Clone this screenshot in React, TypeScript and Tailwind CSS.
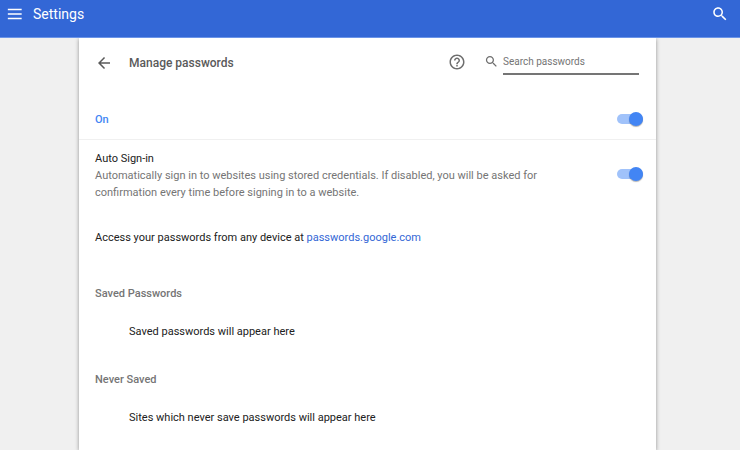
import React, { useState } from "react";

function Toggle({ label }: { label: string }) {
  const [on, setOn] = useState(true);
  return (
    <label className="relative flex h-[14px] w-[26px] shrink-0 cursor-pointer items-center">
      <input type="checkbox" aria-label={label} checked={on} onChange={() => setOn(!on)} className="peer sr-only" />
      <span className="h-[10px] w-[26px] rounded-full bg-[#bdbdbd] peer-checked:bg-[#a0c2fa]" />
      <span className="absolute top-0 left-0 h-[14px] w-[14px] rounded-full bg-[#fafafa] shadow-[0_1px_1px_rgba(0,0,0,0.3)] peer-checked:left-3 peer-checked:bg-[#4285f4]" />
    </label>
  );
}

function Icon({ d, className }: { d: string; className: string }) {
  return (
    <svg viewBox="0 0 24 24" fill="currentColor" aria-hidden="true" className={className}>
      <path d={d} />
    </svg>
  );
}

const search =
  "M15.5 14h-.79l-.28-.27C15.41 12.59 16 11.11 16 9.5 16 5.91 13.09 3 9.5 3S3 5.91 3 9.5 5.91 16 9.5 16c1.61 0 3.09-.59 4.23-1.57l.27.28v.79l5 4.99L20.49 19l-4.99-5zm-6 0C7.01 14 5 11.99 5 9.5S7.01 5 9.5 5 14 7.01 14 9.5 11.99 14 9.5 14z";
const menu = "M4 18.4h16.6v-2H4v2zm0-5.4h16.6v-2H4v2zm0-7.4v2h16.6v-2H4z";
const back = "M20 11H7.83l5.59-5.59L12 4l-8 8 8 8 1.41-1.41L7.83 13H20v-2z";
const help =
  "M11 18h2v-2h-2v2zm1-16C6.48 2 2 6.48 2 12s4.48 10 10 10 10-4.48 10-10S17.52 2 12 2zm0 18c-4.41 0-8-3.59-8-8s3.59-8 8-8 8 3.59 8 8-3.59 8-8 8zm0-14c-2.21 0-4 1.79-4 4h2c0-1.1.9-2 2-2s2 .9 2 2c0 2-3 1.75-3 5h2c0-2.25 3-2.5 3-5 0-2.21-1.79-4-4-4z";

export default function App() {
  return (
    <div className="flex h-screen flex-col overflow-hidden bg-[#f0f0f0] font-['Roboto',sans-serif] text-[11px] leading-[17px] text-[#212121]">
      <header className="relative z-10 flex h-[38px] shrink-0 items-start justify-between border-b border-[#6b94e8] bg-[#3367d6] pt-1 pr-[7px] pl-1 text-white">
        <div className="flex h-5 items-center gap-2">
          <button aria-label="Menu"><Icon d={menu} className="h-5 w-[21px]" /></button>
          <h1 className="text-[14px]">Settings</h1>
        </div>
        <button aria-label="Search settings" className="pr-1"><Icon d={search} className="h-5 w-[18px]" /></button>
      </header>
      <div className="flex grow justify-center pr-[5px]">
        <main className="w-[78.5%] bg-white shadow-[0_1px_4px_rgba(0,0,0,0.4)]">
          <div className="flex h-[62px] items-start pt-3 pr-[17px] pl-4 text-[#6e6e6e]">
            <div className="flex h-[25px] grow items-center gap-4 text-[#5a5a5a]">
              <button aria-label="Back"><Icon d={back} className="h-[18px] w-[18px]" /></button>
              <h2 className="text-[12px] leading-[18px] font-medium">Manage passwords</h2>
            </div>
            <button aria-label="Help" className="mt-[3px] mr-[18px]"><Icon d={help} className="h-[18px] w-[18px]" /></button>
            <label className="flex items-start gap-1">
              <Icon d={search} className="mt-1 h-[15px] w-[15px]" />
              <input type="text" aria-label="Search passwords" placeholder="Search passwords" className="h-[25px] w-[136px] border-b-2 border-[#757575] text-[10px] outline-none placeholder:text-[#757575]" />
            </label>
          </div>
          <section className="flex h-10 items-center justify-between border-b border-[#f0f0f0] pr-[13px] pb-px pl-4">
            <span className="font-medium text-[#4285f4]">On</span>
            <Toggle label="Passwords" />
          </section>
          <section className="flex items-start justify-between gap-8 pt-[10px] pr-[13px] pb-2 pl-4">
            <div>
              <p>Auto Sign-in</p>
              <p className="max-w-[450px] text-[#757575]">Automatically sign in to websites using stored credentials. If disabled, you will be asked for confirmation every time before signing in to a website.</p>
            </div>
            <div className="pt-[17px]">
              <Toggle label="Auto Sign-in" />
            </div>
          </section>
          <p className="px-4 py-5">Access your passwords from any device at <a href="https://passwords.google.com" className="text-[#3367d6]">passwords.google.com</a></p>
          <h3 className="mt-[19px] px-4 font-medium text-[#757575]">Saved Passwords</h3>
          <p className="mt-[21px] px-[50px]">Saved passwords will appear here</p>
          <h3 className="mt-[31px] px-4 font-medium text-[#757575]">Never Saved</h3>
          <p className="mt-[21px] px-[50px]">Sites which never save passwords will appear here</p>
        </main>
      </div>
    </div>
  );
}
